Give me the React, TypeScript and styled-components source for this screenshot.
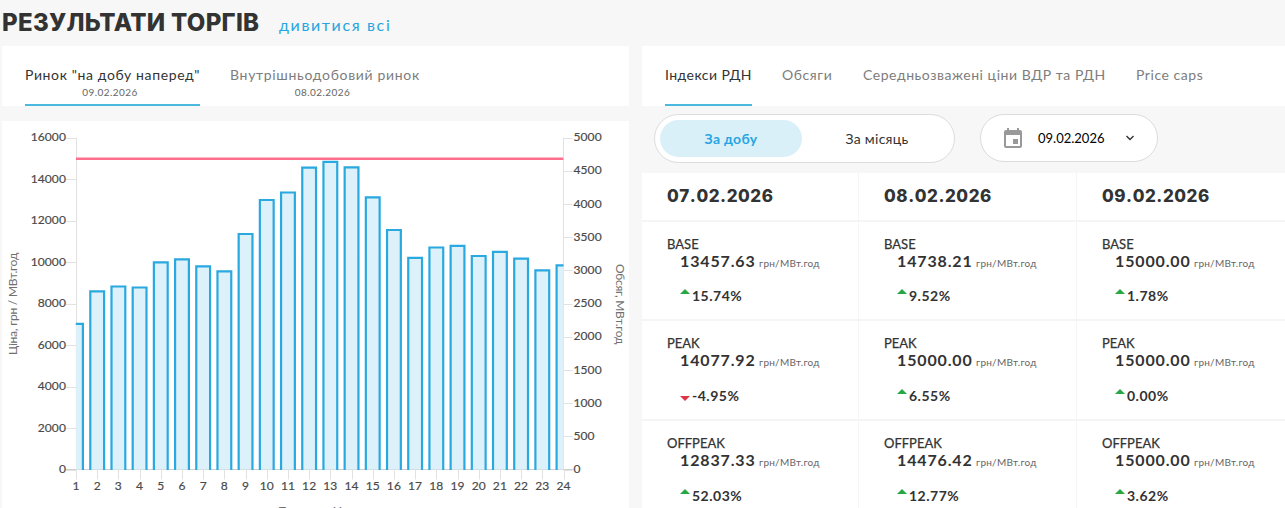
import React from "react";
import styled, { createGlobalStyle } from "styled-components";

const GlobalStyle = createGlobalStyle`
  * { box-sizing: border-box; }
  html, body { margin: 0; background: #f7f7f7; overflow: hidden; }
  body { font-family: Lato, "Open Sans", sans-serif; color: #333; }
`;

const Page = styled.main`
  width: 1285px;
  height: 508px;
  overflow: hidden;
  padding-left: 2px;
  display: flex;
  flex-direction: column;
`;

const Header = styled.header`
  flex: 0 0 46px;
  display: flex;
  align-items: baseline;
  gap: 19px;
  padding-top: 8px;
  white-space: nowrap;
`;

const Title = styled.h1`
  margin: 0;
  width: 258px;
  font: 800 24px/29px Inter, sans-serif;
  letter-spacing: 0.3px;
`;

const AllLink = styled.a`
  font-size: 16px;
  letter-spacing: 1.65px;
  color: #27a5e0;
`;

const Columns = styled.div`
  flex: 1;
  display: flex;
  gap: 13px;
  min-height: 0;
`;

const MarketColumn = styled.section`
  flex: 0 0 627px;
  display: flex;
  flex-direction: column;
  gap: 15px;
`;

const IndexColumn = styled.section`
  flex: 1;
  min-width: 0;
  display: flex;
  flex-direction: column;
`;

const Tabs = styled.nav`
  flex: 0 0 60px;
  display: flex;
  gap: 30px;
  padding-left: 23px;
  background: #fff;
`;

const Tab = styled.div<{ $active?: boolean; $width: number; $spacing: number }>`
  flex: 0 0 ${(p) => p.$width}px;
  display: flex;
  flex-direction: column;
  padding-top: 19px;
  font-size: 14px;
  line-height: 20px;
  letter-spacing: ${(p) => p.$spacing}px;
  white-space: nowrap;
  color: ${(p) => (p.$active ? "#333" : "#7d7d7d")};
  border-bottom: 2px solid ${(p) => (p.$active ? "#4cb9e1" : "transparent")};
`;

const TabDate = styled.small`
  align-self: center;
  margin-right: 5px;
  padding-top: 1px;
  font-size: 10px;
  line-height: 13px;
  letter-spacing: 0.45px;
  color: #666;
`;

const ChartCard = styled.div`
  flex: 1;
  min-height: 0;
  overflow: hidden;
  background: #fff;
`;

const ChartSvg = styled.svg`
  display: block;
  font-family: Lato, sans-serif;
  font-size: 12px;
  fill: #4a4a4a;
`;

const TickLabels = styled.g`
  font-size: 12px;
  letter-spacing: 0.1px;
  stroke: #4a4a4a;
  stroke-width: 0.2px;
`;

const AxisTitle = styled.text<{ $spacing?: number }>`
  fill: #707070;
  letter-spacing: ${(p) => p.$spacing ?? -0.22}px;
`;

const Controls = styled.div`
  flex: 0 0 67px;
  display: flex;
  align-items: flex-start;
  gap: 25px;
  padding: 8px 0 0 12px;
`;

const Toggle = styled.div`
  width: 301px;
  height: 49px;
  display: flex;
  padding: 5px;
  border: 1px solid #dcdcdc;
  border-radius: 25px;
  background: #fff;
`;

const ToggleOption = styled.button<{ $active?: boolean }>`
  flex: 0 0 ${(p) => (p.$active ? 142 : 150)}px;
  height: 37px;
  padding: 0 0 1px;
  border: 0;
  border-radius: 19px;
  font-family: inherit;
  font-size: 14px;
  font-weight: ${(p) => (p.$active ? 700 : 400)};
  letter-spacing: 0.3px;
  color: ${(p) => (p.$active ? "#27a5e0" : "#333")};
  background: ${(p) => (p.$active ? "#daf0f9" : "transparent")};
`;

const DatePicker = styled.div`
  width: 178px;
  height: 48px;
  display: flex;
  align-items: center;
  padding-left: 23px;
  border: 1px solid #dcdcdc;
  border-radius: 24px;
  background: #fff;
`;

const DateValue = styled.span`
  width: 68px;
  margin: 0 20px 0 16px;
  font-size: 13px;
  color: #000;
`;

const Grid = styled.div`
  width: 653px;
  display: grid;
  grid-template-columns: 217px 218px 218px;
  grid-template-rows: 49px 99px 100px 100px;
`;

const Cell = styled.div`
  padding: 15px 0 0 25px;
  background: #fff;
  border-right: 1px solid #f5f5f5;
  border-bottom: 2px solid #f5f5f5;
  white-space: nowrap;
`;

const HeadCell = styled(Cell)`
  padding-top: 12px;
  font: 800 17px/22px Inter, sans-serif;
  font-kerning: none;
  letter-spacing: 0.55px;
`;

const IndexName = styled.div`
  font-size: 13px;
  line-height: 14px;
  color: #333;
  -webkit-text-stroke: 0.25px #333;
`;

const ValueLine = styled.div`
  display: flex;
  align-items: baseline;
  gap: 4px;
  padding: 1px 0 0 13px;
  line-height: 18px;
`;

const Value = styled.strong`
  width: 75px;
  font-size: 16px;
  font-weight: 700;
  letter-spacing: 0.85px;
`;

const Unit = styled.span`
  font-size: 10px;
  letter-spacing: 0.25px;
  color: #666;
`;

const ChangeLine = styled.div<{ $first: boolean }>`
  display: flex;
  gap: 2px;
  align-items: flex-start;
  padding: ${(p) => (p.$first ? 15 : 16)}px 0 0 13px;
  font-size: 14px;
  font-weight: 700;
  line-height: 18px;
  letter-spacing: 0.5px;
`;

const Arrow = styled.svg<{ $down: boolean }>`
  flex: none;
  width: 10px;
  height: 5px;
  margin-top: ${(p) => (p.$down ? 9 : 2)}px;
  fill: ${(p) => (p.$down ? "#dc3545" : "#28a745")};
`;

const barTops = [
  323.8, 291.4, 286.5, 287.5, 262.4, 259.4, 266.3, 271.4, 234, 200, 192.5, 167.6,
  161.8, 167.4, 197.4, 230, 257.9, 247.5, 245.8, 256, 251.8, 258.6, 270.4, 265.4,
];
const LEFT = 74, RIGHT = 561.5, TOP = 16.5, BOTTOM = 348.5;
const xOf = (i: number) => LEFT + ((RIGHT - LEFT) * i) / 23;
const yOf = (share: number) => BOTTOM - (BOTTOM - TOP) * share;

function PriceChart() {
  return (
    <ChartSvg width="627" height="387" viewBox="0 0 627 387">
      <defs>
        <clipPath id="plot"><rect x={LEFT - 0.2} y="0" width={RIGHT - LEFT + 0.2} height={BOTTOM + 0.5} /></clipPath>
      </defs>
      <g stroke="#e2e2e2">
        <path d={`M${LEFT + 0.5} ${TOP}V${BOTTOM}M${RIGHT} ${TOP}V${BOTTOM}`} />
        <path d={`M64 ${BOTTOM}H571.5`} stroke="#cfcfcf" />
        {Array.from({ length: 9 }, (_, i) => <path key={i} d={`M64 ${Math.round(yOf(i / 8)) + 0.5}h10`} />)}
        {Array.from({ length: 11 }, (_, i) => <path key={i} d={`M${RIGHT} ${Math.round(yOf(i / 10)) + 0.5}h9`} />)}
        {barTops.map((_, i) => <path key={i} d={`M${Math.round(xOf(i)) + 0.5} ${BOTTOM}v10`} />)}
      </g>
      <g clipPath="url(#plot)">
        {barTops.map((top, i) => {
          const x = xOf(i), y = top - 121;
          return (
            <g key={i}>
              <rect x={x - 7} y={y} width="14" height={BOTTOM - y} fill="#daf0f9" fillOpacity="0.95" />
              <path d={`M${x - 6.9} ${BOTTOM + 0.5}V${y}h13.8V${BOTTOM + 0.5}`} fill="none" stroke="#2aa8e0" strokeWidth="2.2" />
            </g>
          );
        })}
        <path d={`M${LEFT} 37.8H${RIGHT}`} stroke="#ff6384" strokeOpacity="0.93" strokeWidth="2.4" />
      </g>
      <TickLabels>
        {Array.from({ length: 9 }, (_, i) => (
          <text key={i} x="64" y={yOf(i / 8) + 3.7} textAnchor="end">{i * 2000}</text>
        ))}
        {Array.from({ length: 11 }, (_, i) => (
          <text key={i} x="571.5" y={yOf(i / 10) + 3.7}>{i * 500}</text>
        ))}
        {barTops.map((_, i) => <text key={i} x={xOf(i)} y="369" textAnchor="middle">{i + 1}</text>)}
      </TickLabels>
      <AxisTitle transform="translate(15 183) rotate(-90)" textAnchor="middle">Ціна, грн / МВт.год</AxisTitle>
      <AxisTitle transform="translate(614 183) rotate(90)" textAnchor="middle" $spacing={-0.28}>Обсяг, МВт.год</AxisTitle>
      <AxisTitle x="276" y="394.4" $spacing={0.05}>Погодинні інтервали</AxisTitle>
    </ChartSvg>
  );
}

const names = ["BASE", "PEAK", "OFFPEAK"];
const days = ["07.02.2026", "08.02.2026", "09.02.2026"];
const indices = [
  [["13457.63", "15.74%"], ["14738.21", "9.52%"], ["15000.00", "1.78%"]],
  [["14077.92", "-4.95%"], ["15000.00", "6.55%"], ["15000.00", "0.00%"]],
  [["12837.33", "52.03%"], ["14476.42", "12.77%"], ["15000.00", "3.62%"]],
];

function IndexCell({ name, value, change }: { name: string; value: string; change: string }) {
  const down = change.startsWith("-");
  return (
    <Cell>
      <IndexName>{name}</IndexName>
      <ValueLine><Value>{value}</Value><Unit>грн/МВт.год</Unit></ValueLine>
      <ChangeLine $first={name === names[0]}>
        <Arrow $down={down} viewBox="0 0 10 5"><path d={down ? "M0 0h10L5 5z" : "M0 5h10L5 0z"} /></Arrow>
        {change}
      </ChangeLine>
    </Cell>
  );
}

export default function App() {
  return (
    <Page>
      <GlobalStyle />
      <Header>
        <Title>РЕЗУЛЬТАТИ ТОРГІВ</Title>
        <AllLink>дивитися всі</AllLink>
      </Header>
      <Columns>
        <MarketColumn>
          <Tabs>
            <Tab $active $width={175} $spacing={0.62}>Ринок "на добу наперед"<TabDate>09.02.2026</TabDate></Tab>
            <Tab $width={190} $spacing={0.68}>Внутрішньодобовий ринок<TabDate>08.02.2026</TabDate></Tab>
          </Tabs>
          <ChartCard><PriceChart /></ChartCard>
        </MarketColumn>
        <IndexColumn>
          <Tabs>
            <Tab $active $width={87} $spacing={0.45}>Індекси РДН</Tab>
            <Tab $width={51} $spacing={0.6}>Обсяги</Tab>
            <Tab $width={243} $spacing={0.54}>Середньозважені ціни ВДР та РДН</Tab>
            <Tab $width={68} $spacing={0.55}>Price caps</Tab>
          </Tabs>
          <Controls>
            <Toggle>
              <ToggleOption $active>За добу</ToggleOption>
              <ToggleOption>За місяць</ToggleOption>
            </Toggle>
            <DatePicker>
              <svg width="18" height="20" viewBox="0 0 18 20" fill="#999">
                <path fillRule="evenodd" d="M3 0h2v2h8V0h2v2h1a2 2 0 0 1 2 2v14a2 2 0 0 1-2 2H2a2 2 0 0 1-2-2V4a2 2 0 0 1 2-2h1zM2 7v11h14V7zM9 11h5v5H9z" />
              </svg>
              <DateValue>09.02.2026</DateValue>
              <svg width="8" height="6" viewBox="0 0 8 6" fill="none" stroke="#333" strokeWidth="1.4">
                <path d="M.5 1L4 4.5 7.5 1" />
              </svg>
            </DatePicker>
          </Controls>
          <Grid>
            {days.map((d) => <HeadCell key={d}>{d}</HeadCell>)}
            {indices.map((row, r) =>
              row.map(([value, change], c) => <IndexCell key={`${r}-${c}`} name={names[r]} value={value} change={change} />),
            )}
          </Grid>
        </IndexColumn>
      </Columns>
    </Page>
  );
}
